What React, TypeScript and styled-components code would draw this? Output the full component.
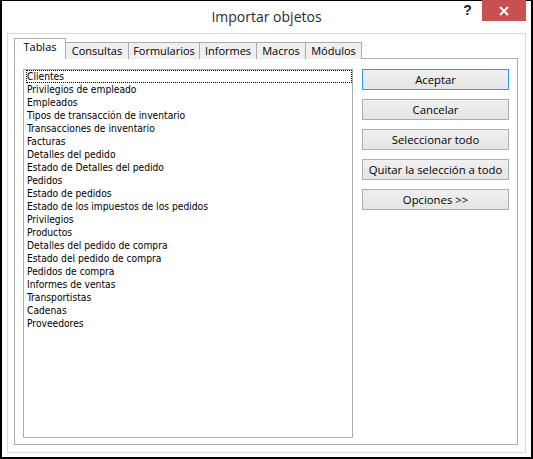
import React from "react";
import styled, { createGlobalStyle } from "styled-components";

const Global = createGlobalStyle`
  html, body { margin: 0; padding: 0; background: #ffffff; }
  * { box-sizing: border-box; }
`;

const Window = styled.div`
  width: 533px;
  height: 459px;
  background: #ffffff;
  border-style: solid;
  border-color: #000000;
  border-width: 1px 2px 2px 2px;
  display: flex;
  flex-direction: column;
`;

const TitleBar = styled.div`
  height: 32px;
  display: grid;
  grid-template-columns: 1fr auto 1fr;
  align-items: start;
`;

const Title = styled.div`
  grid-column: 2;
  font-family: "Open Sans", "Noto Sans", sans-serif;
  font-size: 14px;
  color: #2b2b2b;
  padding-top: 6px;
  line-height: 20px;
`;

const Controls = styled.div`
  grid-column: 3;
  justify-self: end;
  display: flex;
  align-items: flex-start;
  margin-top: -1px;
  margin-right: 5px;
`;

const HelpButton = styled.div`
  width: 28px;
  height: 21px;
  font-family: "Liberation Sans", Arial, sans-serif;
  font-weight: bold;
  font-size: 14px;
  color: #222222;
  display: flex;
  align-items: center;
  justify-content: center;
  padding-bottom: 2px;
  padding-right: 1px;
`;

const CloseButton = styled.div`
  width: 44px;
  height: 21px;
  background: #c75050;
  display: flex;
  align-items: center;
  justify-content: center;
`;

const Frame = styled.div`
  flex: 1;
  margin: 0 5px 4px 5px;
  border: 1px solid #dadada;
  padding: 4px 7px 7px 6px;
  display: flex;
  flex-direction: column;
`;

const TabStrip = styled.div`
  display: flex;
  align-items: flex-end;
  height: 21px;
  position: relative;
  z-index: 1;
`;

const Tab = styled.div<{ $active?: boolean; $w: number }>`
  width: ${(p) => p.$w}px;
  height: ${(p) => (p.$active ? "21px" : "17px")};
  margin-left: ${(p) => (p.$active ? "0" : "-1px")};
  padding-bottom: ${(p) => (p.$active ? "3px" : "0")};
  border: 1px solid #acacac;
  border-bottom: ${(p) => (p.$active ? "1px solid #ffffff" : "none")};
  background: ${(p) => (p.$active ? "#ffffff" : "#f0f0f0")};
  font-family: "Open Sans", "Noto Sans", sans-serif;
  font-size: 11px;
  color: #000000;
  display: flex;
  align-items: center;
  justify-content: center;
  line-height: 16px;
  white-space: nowrap;
  &:first-child { margin-left: 0; }
`;

const Panel = styled.div`
  flex: 1;
  margin-top: -1px;
  border: 1px solid #acacac;
  padding: 10px 7px 6px 8px;
  display: grid;
  grid-template-columns: 330px 147px;
  column-gap: 9px;
`;

const ListBox = styled.div`
  border: 1px solid #acacac;
  background: #ffffff;
  padding: 0 0 0 2px;
`;

const ListItem = styled.div<{ $focused?: boolean }>`
  height: 13px;
  line-height: 13px;
  font-family: "DejaVu Sans Condensed", "DejaVu Sans", sans-serif;
  font-size: 10.2px;
  color: #000000;
  padding-left: 1px;
  white-space: nowrap;
  outline: ${(p) => (p.$focused ? "1px dotted #000000" : "none")};
  outline-offset: -1px;
`;

const ButtonColumn = styled.div`
  display: flex;
  flex-direction: column;
  gap: 9px;
`;

const Button = styled.div<{ $default?: boolean }>`
  height: 21px;
  border: 1px solid ${(p) => (p.$default ? "#3399ff" : "#adadad")};
  background: linear-gradient(#f0f0f0, #e5e5e5);
  font-family: "Open Sans", "Noto Sans", sans-serif;
  font-size: 11.3px;
  color: #000000;
  display: flex;
  align-items: center;
  justify-content: center;
  line-height: 16px;
`;

const tabs = [
  { label: "Tablas", w: 52 },
  { label: "Consultas", w: 64 },
  { label: "Formularios", w: 72 },
  { label: "Informes", w: 58 },
  { label: "Macros", w: 50 },
  { label: "Módulos", w: 57 },
];

const items = [
  "Clientes",
  "Privilegios de empleado",
  "Empleados",
  "Tipos de transacción de inventario",
  "Transacciones de inventario",
  "Facturas",
  "Detalles del pedido",
  "Estado de Detalles del pedido",
  "Pedidos",
  "Estado de pedidos",
  "Estado de los impuestos de los pedidos",
  "Privilegios",
  "Productos",
  "Detalles del pedido de compra",
  "Estado del pedido de compra",
  "Pedidos de compra",
  "Informes de ventas",
  "Transportistas",
  "Cadenas",
  "Proveedores",
];

const buttons = ["Aceptar", "Cancelar", "Seleccionar todo", "Quitar la selección a todo", "Opciones >>"];

export default function App() {
  return (
    <>
      <Global />
      <Window>
        <TitleBar>
          <Title>Importar objetos</Title>
          <Controls>
            <HelpButton>?</HelpButton>
            <CloseButton>
              <svg width="10" height="10" viewBox="0 0 10 10">
                <path d="M1 1 L9 9 M9 1 L1 9" stroke="#ffffff" strokeWidth="2" />
              </svg>
            </CloseButton>
          </Controls>
        </TitleBar>
        <Frame>
          <TabStrip>
            {tabs.map((t, i) => (
              <Tab key={t.label} $active={i === 0} $w={t.w}>
                {t.label}
              </Tab>
            ))}
          </TabStrip>
          <Panel>
            <ListBox>
              {items.map((it, i) => (
                <ListItem key={it} $focused={i === 0}>
                  {it}
                </ListItem>
              ))}
            </ListBox>
            <ButtonColumn>
              {buttons.map((b, i) => (
                <Button key={b} $default={i === 0}>
                  {b}
                </Button>
              ))}
            </ButtonColumn>
          </Panel>
        </Frame>
      </Window>
    </>
  );
}
